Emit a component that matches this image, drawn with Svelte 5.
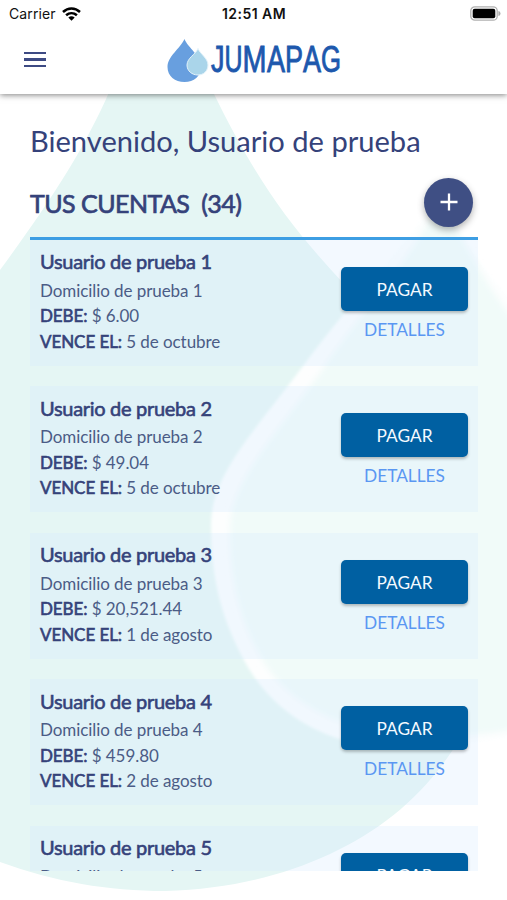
<script>
  const accounts = [
    { n: 1, debt: '6.00', due: '5 de octubre' },
    { n: 2, debt: '49.04', due: '5 de octubre' },
    { n: 3, debt: '20,521.44', due: '1 de agosto' },
    { n: 4, debt: '459.80', due: '2 de agosto' },
    { n: 5 }
  ];
  // each wordmark letter: glyph, left edge, advance width
  const wordmark = [
    ['J', 44, 13.5], ['U', 57.5, 18], ['M', 75.5, 24], ['A', 100, 18],
    ['P', 118, 18], ['A', 136, 18], ['G', 154, 20]
  ];
</script>

<div class="screen">
  <svg class="backdrop" viewBox="0 0 507 900" aria-hidden="true">
    <defs>
      <filter id="soft"><feGaussianBlur stdDeviation="1.5" /></filter>
      <filter id="softer"><feGaussianBlur stdDeviation="3" /></filter>
    </defs>
    <path fill="#e5f6f4" d="M110 90C84 150 50 202 0 270V862C55 882 108 891 165 891C230 889 282 876 330 854C386 828 430 790 462 735L480 500L345 285C290 226 258 184 212 90Z" />
    <path filter="url(#soft)" fill="#fdfefe" d="M440 195C405 245 345 308 300 370C252 434 211 476 211 525C211 580 222 620 245 662C268 704 305 730 350 742C400 753 470 745 530 734V320C490 280 460 235 440 195Z" />
    <path filter="url(#softer)" fill="#f1fbf9" d="M440 198C420 250 358 315 322 370C276 434 232 480 230 525C229 580 240 625 266 666C290 702 335 727 390 734C440 740 490 735 530 726V340C490 295 460 235 440 198Z" />
  </svg>

  <header>
    <div class="status">
      <span class="carrier">Carrier
        <svg width="19" height="14" viewBox="0 0 19 14" aria-hidden="true">
          <g fill="none" stroke="#000" stroke-width="2.500">
            <path d="M1 5C6 .2 13 .2 18 5" />
            <path d="M4.100 8.300C7.300 5.400 11.700 5.400 14.900 8.300" />
          </g>
          <path d="M6.300 10.500Q9.500 7.900 12.700 10.500L9.500 13.700Z" />
        </svg>
      </span>
      <span class="time">12:51 AM</span>
      <svg class="battery" width="31" height="15" viewBox="0 0 31 15" aria-hidden="true">
        <rect x=".8" y=".8" width="26.400" height="13.400" rx="4" fill="#fff" stroke="#b0b0b0" stroke-width="1.300" />
        <rect x="2.700" y="2.700" width="22.600" height="9.600" rx="2" />
        <path fill="#aaa" d="M28.400 5Q30.500 5.400 30.500 7.500Q30.500 9.600 28.400 10Z" />
      </svg>
    </div>
    <div class="bar">
      <button class="menu" aria-label="Menú"><i></i><i></i><i></i></button>
      <svg class="logo" width="180" height="48" viewBox="0 0 180 48" aria-label="JUMAPAG">
        <path fill="#689fdf" d="M17.500 3C21 12 34 19 34 31C34 40 27 46 17.500 46C8 46 .5 40 .5 31C.5 20 13 13 17.500 3Z" />
        <path fill="#aad5ea" stroke="#e4f3fa" stroke-width="1" d="M31 12.500C33 18 41 22 41 29C41 35 36.500 39 31 39C25 39 20 35 20 29C20 22 29 18 31 12.500Z" />
        <text y="35.800">{#each wordmark as [ch, x, w]}<tspan {x} textLength={w} lengthAdjust="spacingAndGlyphs">{ch}</tspan>{/each}</text>
      </svg>
    </div>
  </header>

  <main>
    <h1>Bienvenido, Usuario de prueba</h1>
    <div class="heading">
      <h2>TUS CUENTAS&nbsp; (34)</h2>
      <button class="add" aria-label="Agregar">
        <svg width="18" height="18" viewBox="0 0 18 18"><path d="M9 .5V17.500M.5 9H17.500" stroke="#fff" stroke-width="2.300" /></svg>
      </button>
    </div>
    <div class="list">
      {#each accounts as a}
        <article>
          <div class="info">
            <h3>Usuario de prueba {a.n}</h3>
            <p>Domicilio de prueba {a.n}</p>
            {#if a.debt}
              <p><b>DEBE:</b> $ {a.debt}</p>
              <p><b>VENCE EL:</b> {a.due}</p>
            {/if}
          </div>
          <div class="actions">
            <button class="pay">PAGAR</button>
            {#if a.debt}<button class="details">DETALLES</button>{/if}
          </div>
        </article>
      {/each}
    </div>
  </main>
</div>

<style>
  :global(body) { margin: 0; background: #fff; }
  .screen { position: relative; width: 507px; height: 900px; overflow: hidden; display: flex; flex-direction: column; background: #fff; font-family: Lato, sans-serif; color: #35427a; }
  .backdrop { position: absolute; inset: 0; width: 507px; height: 900px; }
  button { border: 0; padding: 0; background: none; font-family: inherit; }
  header { position: relative; flex: none; height: 94px; background: #fff; box-shadow: 0 1px 6px rgba(0,0,0,.5); }
  .status { display: grid; grid-template-columns: 1fr auto 1fr; align-items: center; height: 27px; padding: 0 6px 0 9px; font: 14px/27px Inter, sans-serif; color: #111; }
  .carrier { display: flex; align-items: center; gap: 6px; letter-spacing: .1px; }
  .time { font-weight: 600; letter-spacing: .45px; margin-left: -2px; }
  .battery { justify-self: end; }
  .bar { display: grid; grid-template-columns: 1fr auto 1fr; align-items: start; padding: 9px 0 0 24px; }
  .menu { display: flex; flex-direction: column; gap: 4px; width: 22px; margin-top: 16px; }
  .menu i { height: 2.300px; background: #3d4a83; }
  .logo { margin-left: -18px; }
  .logo text { font: 36px "Liberation Sans", sans-serif; fill: #1d58ad; stroke: #1d58ad; stroke-width: .9px; }
  main { position: relative; flex: none; height: 777px; padding: 0 29px 0 30px; display: flex; flex-direction: column; box-sizing: border-box; overflow: hidden; }
  h1, h2, h3, p { margin: 0; font-weight: 400; white-space: nowrap; }
  h1 { margin-top: 28px; font-size: 29.100px; line-height: 38px; }
  .heading { display: flex; flex: none; justify-content: space-between; align-items: center; height: 79.500px; padding: 0 5px 0 0; border-bottom: 3px solid #3d9ee3; box-sizing: border-box; }
  h2 { font-size: 25px; line-height: 30px; padding-top: 10px; letter-spacing: -.53px; -webkit-text-stroke: .7px #35427a; }
  .add { width: 49px; height: 49px; margin-top: 8px; border-radius: 50%; background: #3f4f84; display: flex; align-items: center; justify-content: center; box-shadow: 0 3px 7px rgba(0,0,0,.3); }
  .list { display: flex; flex-direction: column; gap: 20.600px; }
  article { flex: none; display: flex; justify-content: space-between; height: 126px; padding: 0 10px; box-sizing: border-box; background: rgba(212,232,255,.27); }
  .info { padding-top: 5.500px; }
  h3 { font-size: 20px; line-height: 32px; padding-bottom: .5px; letter-spacing: -.3px; -webkit-text-stroke: .6px #35427a; }
  p { font-size: 17px; line-height: 25.500px; letter-spacing: -.07px; color: #4b5c86; }
  b { font-weight: 400; color: #35427a; -webkit-text-stroke: .6px #35427a; }
  .actions { display: flex; flex-direction: column; align-items: center; width: 127px; padding-top: 27px; }
  .pay { width: 127px; height: 44px; border-radius: 5px; background: #0060a2; color: #f4faff; font-size: 17.300px; line-height: 45px; box-shadow: 0 2px 3px rgba(0,0,0,.25); }
  .details { margin-top: 7px; font-size: 17.300px; line-height: 24px; color: #5a97f2; }
</style>
